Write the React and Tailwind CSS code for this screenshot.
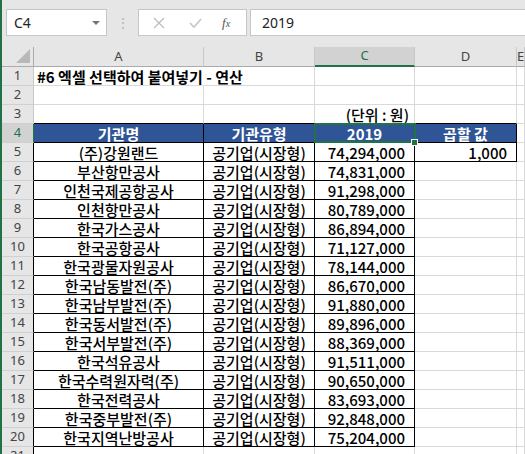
import { Fragment } from 'react'

const rows = [
  ['(주)강원랜드', '74,294,000'],
  ['부산항만공사', '74,831,000'],
  ['인천국제공항공사', '91,298,000'],
  ['인천항만공사', '80,789,000'],
  ['한국가스공사', '86,894,000'],
  ['한국공항공사', '71,127,000'],
  ['한국광물자원공사', '78,144,000'],
  ['한국남동발전(주)', '86,670,000'],
  ['한국남부발전(주)', '91,880,000'],
  ['한국동서발전(주)', '89,896,000'],
  ['한국서부발전(주)', '88,369,000'],
  ['한국석유공사', '91,511,000'],
  ['한국수력원자력(주)', '90,650,000'],
  ['한국전력공사', '83,693,000'],
  ['한국중부발전(주)', '92,848,000'],
  ['한국지역난방공사', '75,204,000'],
]

const ui = { fontFamily: '"Noto Sans", "Segoe UI", sans-serif' }
const kr = { fontFamily: '"Noto Sans CJK KR", "Malgun Gothic", sans-serif' }

function Toolbar() {
  return (
    <div className="h-[47px] bg-[#e6e6e6] flex items-start pt-[9px] pl-[4px]">
      <div className="w-[101px] h-[27px] bg-white border border-[#c6c6c6] flex items-center justify-between pl-[7px] pr-[6px] text-[14px] text-[#222]" style={ui}>
        <span>C4</span>
        <span className="w-0 h-0 border-l-[4px] border-r-[4px] border-t-[4px] border-l-transparent border-r-transparent border-t-[#777]" />
      </div>
      <div className="w-[31px] h-[27px] flex items-center justify-center text-[#b0b0b0] text-[12px]">⋮</div>
      <div className="w-[109px] h-[27px] bg-white border border-[#c6c6c6] flex items-center">
        <svg width="12" height="12" viewBox="0 0 12 12" className="ml-[14px]">
          <path d="M1 1 L11 11 M11 1 L1 11" stroke="#bdbdbd" strokeWidth="1.3" fill="none" />
        </svg>
        <svg width="13" height="12" viewBox="0 0 13 12" className="ml-[24px]">
          <path d="M1 6 L5 10 L12 2" stroke="#c4c4c4" strokeWidth="1.6" fill="none" />
        </svg>
        <span className="ml-[20px] text-[13px] italic text-[#555]" style={{ fontFamily: '"Liberation Serif", serif' }}>
          f<span className="text-[10px]">x</span>
        </span>
      </div>
      <div className="flex-1 h-[27px] ml-[3px] bg-white border border-[#c6c6c6] border-r-0 flex items-center pl-[11px] text-[14px] text-[#222]" style={ui}>
        2019
      </div>
    </div>
  )
}

function inTable(r, c) {
  if (r >= 4 && r <= 20 && c >= 1 && c <= 3) return true
  if ((r === 4 || r === 5) && c === 4) return true
  return false
}

function Cell({ r, c, children, className = '' }) {
  const right = inTable(r, c) || inTable(r, c + 1)
  const bottom = inTable(r, c) || inTable(r + 1, c)
  const rb = right ? 'border-r-black' : 'border-r-[#d9d9d9]'
  const bb = bottom ? 'border-b-black' : 'border-b-[#d9d9d9]'
  return (
    <div className={`relative h-[19px] border-r border-b ${rb} ${bb} flex items-center text-[15px] leading-[17px] text-black whitespace-nowrap ${className}`} style={kr}>
      {children}
    </div>
  )
}

function RowHead({ r }) {
  const sel = r === 4
  let cls = 'border-r-[#c8c8c8]'
  if (r >= 5) cls = 'border-r-black'
  if (sel) cls = 'border-r-[#217346]'
  return (
    <div
      className={`h-[19px] border-b border-b-[#d0d0d0] border-r ${cls} flex items-center justify-center text-[13px] ${sel ? 'bg-[#d2d2d2] text-[#217346]' : 'bg-[#e6e6e6] text-[#444]'}`}
      style={ui}
    >
      {r}
    </div>
  )
}

export default function App() {
  const head = 'bg-[#2f5597] text-white font-bold justify-center'
  return (
    <div className="w-[525px] h-[454px] overflow-hidden bg-white flex">
      <div className="w-[2px] shrink-0 bg-[#217346]" />
      <div className="flex-1 min-w-0">
        <Toolbar />
        <div className="grid grid-cols-[32px_170px_111px_100px_102px_1fr]">
          {/* column headers */}
          <div className="h-[20px] bg-[#e6e6e6] border-r border-b border-[#ababab] relative">
            <svg width="14" height="14" viewBox="0 0 14 14" className="absolute right-[3px] bottom-[3px]">
              <path d="M14 0 L14 14 L0 14 Z" fill="#b8b8b8" />
            </svg>
          </div>
          {['A', 'B', 'C', 'D', 'E'].map((l) => (
            <div
              key={l}
              className={`h-[20px] flex items-center justify-center text-[13px] border-r border-r-[#c8c8c8] ${l === 'C' ? 'bg-[#d2d2d2] text-[#217346] border-b-2 border-b-[#217346]' : 'bg-[#e6e6e6] text-[#444] border-b border-b-[#ababab]'}`}
              style={ui}
            >
              {l}
            </div>
          ))}

          {/* row 1 */}
          <RowHead r={1} />
          <Cell r={1} c={1} className="overflow-visible z-10 border-r-transparent font-bold pl-[3px] text-[15.5px]">
            #6 엑셀 선택하여 붙여넣기 - 연산
          </Cell>
          <Cell r={1} c={2} />
          <Cell r={1} c={3} />
          <Cell r={1} c={4} />
          <Cell r={1} c={5} />

          {/* row 2 */}
          <RowHead r={2} />
          {[1, 2, 3, 4, 5].map((c) => <Cell key={c} r={2} c={c} />)}

          {/* row 3 */}
          <RowHead r={3} />
          <Cell r={3} c={1} />
          <Cell r={3} c={2} />
          <Cell r={3} c={3} className="justify-end pr-[5px] font-medium">(단위 : 원)</Cell>
          <Cell r={3} c={4} />
          <Cell r={3} c={5} />

          {/* row 4 header */}
          <RowHead r={4} />
          <Cell r={4} c={1} className={head}>기관명</Cell>
          <Cell r={4} c={2} className={head}>기관유형</Cell>
          <Cell r={4} c={3} className={head}>
            2019
            <div className="absolute z-10 -left-px -top-px -right-[2px] -bottom-[1px] border-2 border-[#217346] pointer-events-none" />
            <div className="absolute z-20 -right-[4px] -bottom-[4px] w-[7px] h-[7px] bg-[#217346] border border-white" />
          </Cell>
          <Cell r={4} c={4} className={head}>곱할 값</Cell>
          <Cell r={4} c={5} />

          {rows.map(([name, val], i) => {
            const r = i + 5
            return (
              <Fragment key={r}>
                <RowHead r={r} />
                <Cell r={r} c={1} className="justify-center font-medium">{name}</Cell>
                <Cell r={r} c={2} className="justify-center font-medium">공기업(시장형)</Cell>
                <Cell r={r} c={3} className="justify-end pr-[9px] font-medium text-[14.5px]">{val}</Cell>
                <Cell r={r} c={4} className="justify-end pr-[9px] font-medium text-[14.5px]">{r === 5 ? '1,000' : ''}</Cell>
                <Cell r={r} c={5} />
              </Fragment>
            )
          })}

          <RowHead r={21} />
          {[1, 2, 3, 4, 5].map((c) => <Cell key={c} r={21} c={c} />)}
        </div>
      </div>
    </div>
  )
}
